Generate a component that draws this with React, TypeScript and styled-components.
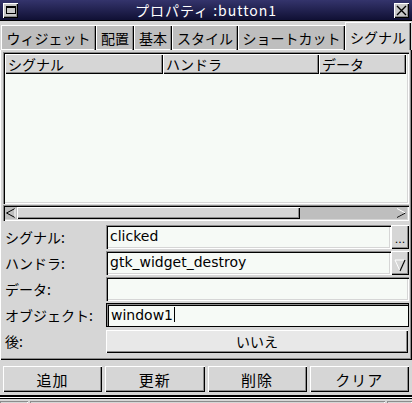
import React from 'react';
import styled, { createGlobalStyle, css } from 'styled-components';

const GlobalStyle = createGlobalStyle`
  html, body {
    margin: 0;
    padding: 0;
    background: #d6d6d6;
  }
  * {
    box-sizing: border-box;
  }
`;

const jp = `"Noto Sans CJK JP", "DejaVu Sans", sans-serif`;
const latin = `"DejaVu Sans", "Noto Sans CJK JP", sans-serif`;

const raised = css`
  box-shadow: inset 1px 1px 0 #fff, inset -1px -1px 0 #000, inset -2px -2px 0 #8c8c8c;
`;

const sunken = css`
  box-shadow: inset 1px 1px 0 #8c8c8c, inset 2px 2px 0 #000, inset -1px -1px 0 #fff, inset -2px -2px 0 #d6d6d6;
`;

const Window = styled.div`
  width: 412px;
  height: 403px;
  display: flex;
  flex-direction: column;
  background: #d6d6d6;
  font-family: ${jp};
  font-size: 14px;
  color: #000;
  overflow: hidden;
`;

const TitleBar = styled.div`
  height: 21px;
  flex: none;
  display: flex;
  align-items: center;
  padding: 0 3px;
  background: linear-gradient(to bottom, #34346c, #101034);
  border-bottom: 1px solid #000;
`;

const TitleText = styled.div`
  flex: 1;
  text-align: center;
  color: #fff;
  font-size: 14px;
  line-height: 20px;
  letter-spacing: 1px;
`;

const WinButton = styled.div`
  width: 15px;
  height: 15px;
  background: #c8c8c8;
  ${raised};
  display: flex;
  align-items: center;
  justify-content: center;
`;

const MenuGlyph = styled.div`
  width: 10px;
  height: 8px;
  border: 1px solid #000;
  border-top-width: 2px;
  background: #c8c8c8;
`;

const Tabs = styled.div`
  height: 29px;
  flex: none;
  display: flex;
  align-items: flex-end;
  padding-left: 1px;
`;

const Tab = styled.div<{ $active?: boolean; $w: number }>`
  width: ${p => p.$w}px;
  height: ${p => (p.$active ? 28 : 25)}px;
  display: flex;
  align-items: center;
  justify-content: center;
  background: ${p => (p.$active ? '#d6d6d6' : '#bebebe')};
  box-shadow: ${p =>
    p.$active
      ? 'inset 1px 1px 0 #fff, inset -1px 0 0 #000, inset -2px 0 0 #8c8c8c'
      : 'inset 1px 1px 0 #fff, inset -1px 0 0 #000, inset -2px 0 0 #8c8c8c, inset 0 -1px 0 #fff'};
  font-size: 14px;
  white-space: nowrap;
  padding-top: 1px;
`;

const Page = styled.div`
  flex: none;
  height: 310px;
  display: flex;
  flex-direction: column;
  padding: 2px 3px 4px 3px;
  box-shadow: inset 1px 0 0 #fff, inset -1px -1px 0 #000, inset -2px -2px 0 #8c8c8c;
`;

const ListFrame = styled.div`
  height: 152px;
  display: flex;
  flex-direction: column;
  ${sunken};
  background: #f6faf6;
  padding: 2px 3px 2px 2px;
`;

const HeaderRow = styled.div`
  display: flex;
  height: 20px;
`;

const HeaderCell = styled.div<{ $w: number }>`
  width: ${p => p.$w}px;
  flex: none;
  background: #d6d6d6;
  ${raised};
  font-size: 14px;
  line-height: 20px;
  padding-left: 3px;
  white-space: nowrap;
`;

const HeaderFiller = styled.div`
  flex: 1;
  background: #d6d6d6;
  ${raised};
`;

const ListBody = styled.div`
  flex: 1;
  background: #f6faf6;
`;

const HScroll = styled.div`
  margin-top: 1px;
  height: 16px;
  display: flex;
  align-items: stretch;
  background: #bebebe;
  ${sunken};
  padding: 2px;
`;

const ArrowBtn = styled.div`
  width: 12px;
  flex: none;
  display: flex;
  align-items: center;
  justify-content: center;
`;

const Thumb = styled.div`
  width: 283px;
  flex: none;
  background: #d6d6d6;
  ${raised};
`;

const Trough = styled.div`
  flex: 1;
`;

const Form = styled.div`
  margin-top: 4px;
  display: grid;
  grid-template-columns: 103px 1fr;
  row-gap: 2px;
  align-items: center;
`;

const Label = styled.div`
  font-size: 14px;
  line-height: 24px;
  padding-left: 2px;
  white-space: nowrap;
`;

const FieldRow = styled.div`
  display: flex;
  height: 24px;
`;

const Entry = styled.div<{ $focus?: boolean }>`
  flex: 1;
  height: 24px;
  background: #f6faf6;
  font-family: ${latin};
  font-size: 14px;
  line-height: 22px;
  padding-left: 4px;
  white-space: nowrap;
  overflow: hidden;
  ${p =>
    p.$focus
      ? css`
          border: 1px solid #000;
          box-shadow: inset 1px 1px 0 #8c8c8c, inset 2px 2px 0 #000;
        `
      : sunken};
`;

const Caret = styled.span`
  display: inline-block;
  width: 1px;
  height: 15px;
  background: #000;
  vertical-align: -2px;
  margin-left: 1px;
`;

const SideButton = styled.div`
  width: 18px;
  flex: none;
  background: #d6d6d6;
  ${raised};
  display: flex;
  align-items: flex-end;
  justify-content: center;
  font-family: ${latin};
  font-size: 11px;
  padding-bottom: 3px;
`;

const ToggleButton = styled.div`
  height: 23px;
  background: #e8e8e8;
  ${raised};
  display: flex;
  align-items: center;
  justify-content: center;
  font-size: 14px;
  margin-right: 1px;
`;

const ButtonRow = styled.div`
  flex: none;
  display: grid;
  grid-template-columns: repeat(4, 1fr);
  column-gap: 3px;
  padding: 6px 3px 0 3px;
  height: 32px;
`;

const ActionButton = styled.div`
  height: 26px;
  background: #d6d6d6;
  ${raised};
  display: flex;
  align-items: center;
  justify-content: center;
  font-size: 15px;
  letter-spacing: 1px;
`;

const Divider = styled.div`
  flex: none;
  margin-top: 3px;
  height: 3px;
  border-top: 2px solid #000;
  border-bottom: 1px solid #fff;
`;

const StatusBar = styled.div`
  flex: 1;
  display: flex;
  gap: 2px;
  padding: 2px 0 0 0;
  border-top: 1px solid #000;
`;

const StatusCell = styled.div<{ $w?: number }>`
  ${p => (p.$w ? `width: ${p.$w}px; flex: none;` : 'flex: 1;')}
  box-shadow: inset 1px 1px 0 #8c8c8c, inset -1px 0 0 #fff;
`;

export default function App() {
  const tabs: [string, number, boolean?][] = [
    ['ウィジェット', 95],
    ['配置', 38],
    ['基本', 38],
    ['スタイル', 66],
    ['ショートカット', 107],
    ['シグナル', 66, true],
  ];

  return (
    <Window>
      <GlobalStyle />
      <TitleBar>
        <WinButton>
          <MenuGlyph />
        </WinButton>
        <TitleText>プロパティ :button1</TitleText>
        <WinButton>
          <svg width="11" height="11" viewBox="0 0 11 11">
            <path d="M1 1 L10 10 M10 1 L1 10" stroke="#000" strokeWidth="1.4" />
          </svg>
        </WinButton>
      </TitleBar>

      <Tabs>
        {tabs.map(([label, w, active]) => (
          <Tab key={label} $w={w} $active={active}>
            {label}
          </Tab>
        ))}
      </Tabs>

      <Page>
        <ListFrame>
          <HeaderRow>
            <HeaderCell $w={158}>シグナル</HeaderCell>
            <HeaderCell $w={156}>ハンドラ</HeaderCell>
            <HeaderCell $w={87}>データ</HeaderCell>
            <HeaderFiller />
          </HeaderRow>
          <ListBody />
        </ListFrame>

        <HScroll>
          <ArrowBtn>
            <svg width="10" height="10" viewBox="0 0 10 10">
              <path d="M9 0.5 L0.5 5 L9 9.5" fill="none" stroke="#000" />
              <path d="M9 0.5 L9 9.5" stroke="#fff" />
            </svg>
          </ArrowBtn>
          <Thumb />
          <Trough />
          <ArrowBtn>
            <svg width="10" height="10" viewBox="0 0 10 10">
              <path d="M1 0.5 L9.5 5 L1 9.5" fill="none" stroke="#fff" />
              <path d="M9.5 5 L1 9.5" stroke="#000" />
            </svg>
          </ArrowBtn>
        </HScroll>

        <Form>
          <Label>シグナル:</Label>
          <FieldRow>
            <Entry>clicked</Entry>
            <SideButton>...</SideButton>
          </FieldRow>

          <Label>ハンドラ:</Label>
          <FieldRow>
            <Entry>gtk_widget_destroy</Entry>
            <SideButton>
              <svg width="12" height="14" viewBox="0 0 12 14">
                <path d="M1 2 L11 2 L6 13 Z" fill="none" stroke="#fff" />
                <path d="M11 2 L6 13" stroke="#000" strokeWidth="1.2" />
              </svg>
            </SideButton>
          </FieldRow>

          <Label>データ:</Label>
          <FieldRow>
            <Entry />
          </FieldRow>

          <Label>オブジェクト:</Label>
          <FieldRow>
            <Entry $focus>
              window1
              <Caret />
            </Entry>
          </FieldRow>

          <Label>後:</Label>
          <ToggleButton>いいえ</ToggleButton>
        </Form>
      </Page>

      <ButtonRow>
        <ActionButton>追加</ActionButton>
        <ActionButton>更新</ActionButton>
        <ActionButton>削除</ActionButton>
        <ActionButton>クリア</ActionButton>
      </ButtonRow>

      <Divider />

      <StatusBar>
        <StatusCell $w={28} />
        <StatusCell />
        <StatusCell $w={25} />
      </StatusBar>
    </Window>
  );
}
